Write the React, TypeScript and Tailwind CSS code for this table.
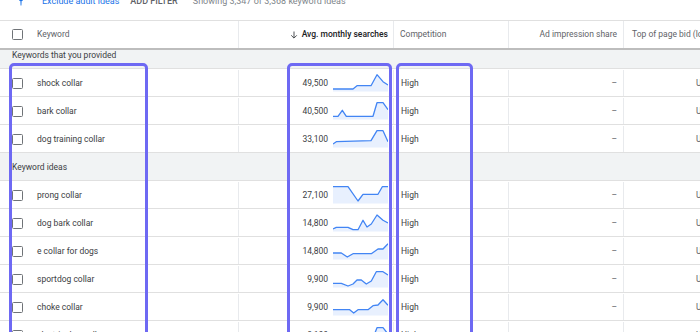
import React from "react";

type Pt = [number, number];

const Spark = ({ pts }: { pts: Pt[] }) => {
  const line = pts.map((p, i) => `${i ? "L" : "M"}${p[0]},${p[1]}`).join(" ");
  const fill = `${line} L55,17.5 L0,17.5 Z`;
  return (
    <svg width="55" height="18" viewBox="0 0 55 18" className="shrink-0">
      <path d={fill} fill="#e8f0fe" />
      <path d={line} fill="none" stroke="#4285f4" strokeWidth="1.3" strokeLinejoin="round" />
    </svg>
  );
};

const Check = () => (
  <div className="w-[11px] h-[11px] border-[1.5px] border-[#6f7377] rounded-[1.5px] shrink-0" />
);

type Row = { kw: string; vol: string; pts: Pt[] } | { group: string; cls: string };

const rows: Row[] = [
  { group: "Keywords that you provided", cls: "h-[19px] items-start pt-[1px] leading-[9px]" },
  { kw: "shock collar", vol: "49,500", pts: [[0, 15], [20, 15], [24, 11.7], [38, 11.7], [44, 0.7], [50, 7.7], [55, 11]] },
  { kw: "bark collar", vol: "40,500", pts: [[0, 14.3], [5, 14.3], [9.3, 8.3], [13.3, 14.3], [40, 14.3], [44, 0.7], [50, 0.7], [55, 7.7]] },
  { kw: "dog training collar", vol: "33,100", pts: [[0, 14], [3.3, 11.7], [38, 10.7], [44, 0.7], [50, 0.7], [55, 11.7]] },
  { group: "Keyword ideas", cls: "h-[28px] items-center pt-[1px]" },
  { kw: "prong collar", vol: "27,100", pts: [[0, 0.7], [15, 0.7], [25, 15], [30, 8.3], [45, 8.3], [49.3, 0.7], [55, 0.7]] },
  { kw: "dog bark collar", vol: "14,800", pts: [[0, 15], [3.3, 13.3], [15, 13.3], [20, 15.7], [25, 15.7], [30, 6.3], [34, 13], [38.3, 10], [44, 1], [50, 6.3], [55, 9]] },
  { kw: "e collar for dogs", vol: "14,800", pts: [[0, 11], [8.3, 11], [14.3, 15], [20, 11.7], [38.3, 11.7], [45, 7], [50, 7], [55, 1.7]] },
  { kw: "sportdog collar", vol: "9,900", pts: [[0, 13.3], [8.3, 13.3], [15, 16], [20, 14], [24, 10], [28.3, 10], [33.3, 14], [38.3, 11], [43.3, 1.7], [50, 1.7], [55, 5]] },
  { kw: "choke collar", vol: "9,900", pts: [[0, 11.7], [16.7, 11.7], [20.7, 15], [25, 11.7], [35, 11.7], [40, 7.7], [45, 7], [50, 1.7], [55, 7.3]] },
  { kw: "electric dog collar", vol: "8,100", pts: [[0, 12], [15, 12], [20, 14], [30, 12], [40, 12], [44, 1.7], [50, 1.7], [55, 8]] },
];

export default function App() {
  return (
    <div className="relative w-[700px] h-[332px] overflow-hidden bg-white font-[Roboto,sans-serif] text-[8.5px] text-[#3c4043]">
      {/* top toolbar (scrolled, partly hidden) */}
      <div className="h-[20px] overflow-hidden">
        <div className="flex items-center h-[10px] -mt-[4px] leading-[10px] whitespace-nowrap">
          <svg width="6" height="10" viewBox="0 0 6 10" className="ml-[18px]">
            <path d="M0.5,1 L5.5,1 L4.5,5 L3.6,5 L3.4,9.5 L2.6,9.5 L2.4,5 L1.5,5 Z" fill="#1a73e8" />
          </svg>
          <span className="ml-[18px] text-[9px] text-[#1a73e8]">Exclude adult ideas</span>
          <span className="ml-[11px] text-[9px] font-medium text-[#5f6368]">ADD FILTER</span>
          <span className="ml-[15px] text-[9px] text-[#80868b]">Showing 3,347 of 3,368 keyword ideas</span>
        </div>
      </div>

      {/* header */}
      <div className="flex h-[30px] border-t border-b-2 border-t-[#e0e0e0] border-b-[#bdbdbd] whitespace-nowrap">
        <div className="w-[239px] shrink-0 flex items-center border-r border-[#e8eaed] pl-[12px]">
          <Check />
          <span className="ml-[14px] text-[#5f6368]">Keyword</span>
        </div>
        <div className="w-[155px] shrink-0 flex items-center justify-end border-r border-[#e8eaed] pr-[5px] gap-[4px] font-medium text-[#202124]">
          <svg width="8" height="8" viewBox="0 0 8 8">
            <path d="M4,0.5 V7 M1.2,4.3 L4,7.1 L6.8,4.3" fill="none" stroke="#3c4043" strokeWidth="0.9" />
          </svg>
          <span>Avg. monthly searches</span>
        </div>
        <div className="w-[115px] shrink-0 flex items-center border-r border-[#e8eaed] pl-[6px] text-[#5f6368]">
          Competition
        </div>
        <div className="w-[115px] shrink-0 flex items-center justify-end border-r border-[#e8eaed] pr-[6px] text-[#5f6368]">
          Ad impression share
        </div>
        <div className="w-[140px] shrink-0 flex items-center pl-[8px] text-[#5f6368]">
          Top of page bid (low range)
        </div>
      </div>

      {/* body */}
      <div className="flex flex-col">
        {rows.map((r, i) =>
          "group" in r ? (
            <div
              key={i}
              className={`${r.cls} shrink-0 flex pl-[12px] bg-[#f1f3f4] border-b border-[#e0e0e0] text-[#3c4043]`}
            >
              {r.group}
            </div>
          ) : (
            <div key={i} className="h-[28px] shrink-0 flex pt-[1px] border-b border-[#e0e0e0] whitespace-nowrap">
              <div className="w-[239px] shrink-0 flex items-center border-r border-[#e8eaed] pl-[12px]">
                <Check />
                <span className="ml-[14px]">{r.kw}</span>
              </div>
              <div className="w-[155px] shrink-0 flex items-center justify-end border-r border-[#e8eaed] pr-[5px] gap-[5px]">
                <span>{r.vol}</span>
                <Spark pts={r.pts} />
              </div>
              <div className="w-[115px] shrink-0 flex items-center border-r border-[#e8eaed] pl-[7px]">High</div>
              <div className="w-[115px] shrink-0 flex items-center justify-end border-r border-[#e8eaed] pr-[6px] text-[#5f6368]">
                –
              </div>
              <div className="w-[112px] shrink-0 flex items-center justify-end pr-[8px] text-[#5f6368]">US$2.31</div>
            </div>
          )
        )}
      </div>

      {/* highlight annotations */}
      <div className="absolute left-[9px] top-[63px] w-[139px] h-[300px] border-[3px] border-[#6e69f3] rounded-[5px]" />
      <div className="absolute left-[287px] top-[63px] w-[105px] h-[300px] border-[3px] border-[#6e69f3] rounded-[5px]" />
      <div className="absolute left-[396px] top-[63px] w-[77px] h-[300px] border-[3px] border-[#6e69f3] rounded-[5px]" />
    </div>
  );
}
